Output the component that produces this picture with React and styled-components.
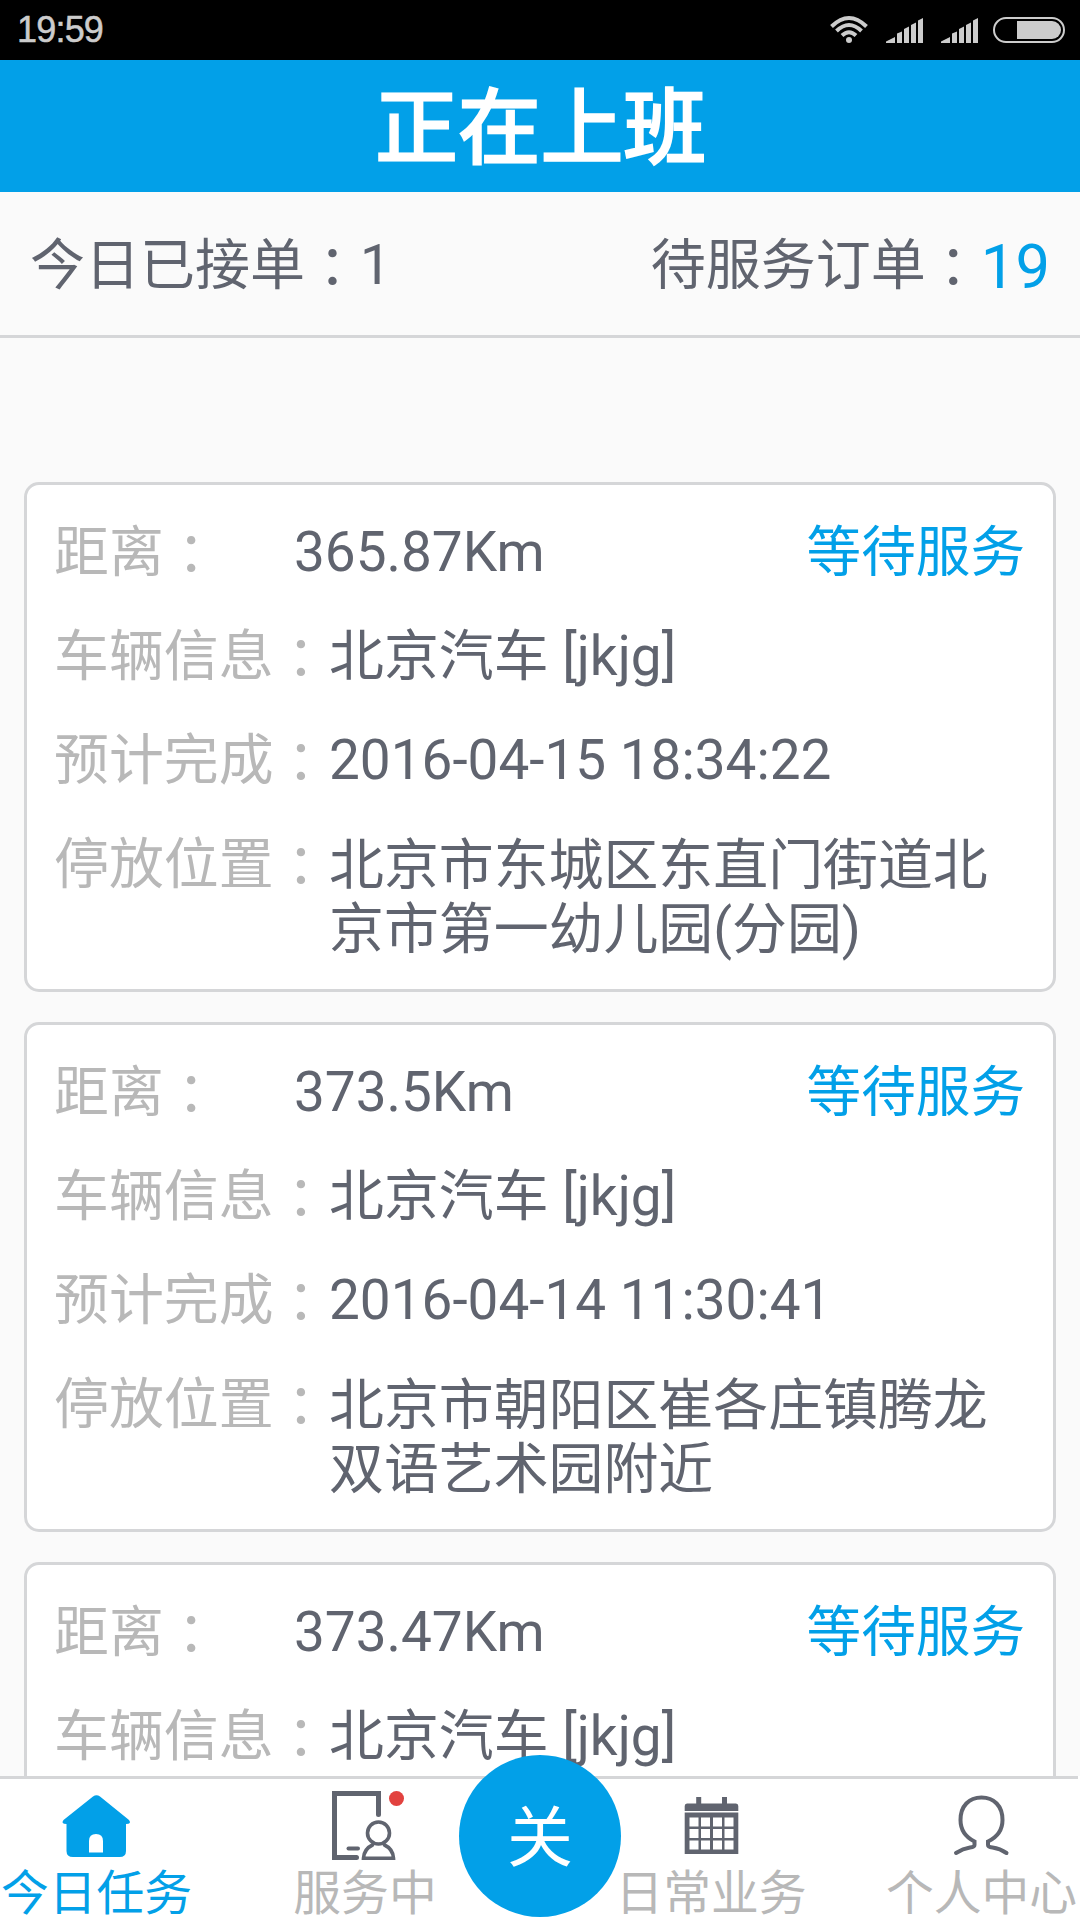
import React from "react";
import styled, { createGlobalStyle } from "styled-components";

const BLUE = "#02a0e8";
const INK = "#60646f";
const MUTED = "#b8b8b8";
const LINE = "#d5d6d8";

const GlobalStyle = createGlobalStyle`
  * { box-sizing: border-box; }
  body {
    margin: 0;
    background: #fafafa;
    font-family: Roboto, "Noto Sans CJK SC", sans-serif;
  }
`;

const Screen = styled.div`
  width: 1080px;
  height: 1920px;
  overflow: hidden;
  display: flex;
  flex-direction: column;
  background: #fafafa;
  color: ${INK};
`;

const StatusBar = styled.div`
  flex: none;
  height: 60px;
  padding: 0 15px 0 17px;
  display: flex;
  align-items: center;
  justify-content: space-between;
  background: #000;
`;

const Clock = styled.span`
  font-family: "Liberation Sans", Arial, sans-serif;
  font-size: 36px;
  line-height: 60px;
  letter-spacing: -0.8px;
  color: #ccc;
  -webkit-text-stroke: 0.5px #ccc;
`;

const StatusIcons = styled.svg`
  display: block;
  width: 240px;
  height: 60px;
`;

const TitleBar = styled.h1`
  flex: none;
  margin: 0;
  padding-left: 2px;
  height: 132px;
  background: ${BLUE};
  color: #fff;
  text-align: center;
  font-size: 82px;
  font-weight: 400;
  letter-spacing: 0.8px;
  line-height: 138px;
  -webkit-text-stroke: 3px #fff;
`;

const Stats = styled.div`
  flex: none;
  height: 146px;
  padding: 0 30px;
  display: flex;
  justify-content: space-between;
  border-bottom: 3px solid ${LINE};
  font-size: 55px;
  line-height: 146px;
`;

const Stat = styled.div`
  display: flex;
  white-space: pre;
`;

const FullColon = styled.span`
  font-family: "Noto Sans CJK JP", "Noto Sans CJK TC", sans-serif;
  line-height: 0;
  vertical-align: -3px;
`;

const Count = styled.span`
  color: ${(p) => (p.$accent ? BLUE : INK)};
  font-size: ${(p) => (p.$accent ? 61.5 : 55)}px;
  line-height: ${(p) => (p.$accent ? 150 : 146)}px;
`;

const OrderList = styled.main`
  flex: 1;
  min-height: 0;
  overflow: hidden;
  padding: 144px 24px 0;
  display: flex;
  flex-direction: column;
  gap: 30px;
`;

const Card = styled.article`
  flex: none;
  height: 510px;
  padding: 15px 28px 0 27px;
  border: 3px solid ${LINE};
  border-radius: 15px;
  background: #fff;
  font-size: 54.9px;
`;

const Row = styled.div`
  display: flex;
  height: 104px;
  line-height: 104px;
  white-space: nowrap;
`;

const Label = styled.span`
  flex: none;
  width: ${(p) => p.$width || 275}px;
  color: ${MUTED};
`;

const Value = styled.span`
  flex: 1;
`;

const Address = styled.span`
  flex: none;
  width: 664px;
  padding-top: 21px;
  line-height: 64.45px;
  white-space: normal;
`;

const State = styled.span`
  color: ${BLUE};
  font-size: 54.6px;
`;

const TabBar = styled.nav`
  flex: none;
  position: relative;
  height: 144px;
  background: #fff;
`;

const Tabs = styled.div`
  width: 1078px;
  height: 144px;
  display: grid;
  grid-template-columns: 193px 344px 348px 193px;
  border-top: 3px solid ${LINE};
`;

const Tab = styled.div`
  display: flex;
  flex-direction: column;
  align-items: center;
  gap: 5px;
  color: ${(p) => (p.$active ? BLUE : MUTED)};
  font-size: 47.8px;
  line-height: 52px;
  white-space: nowrap;
`;

const TabIcon = styled.svg`
  flex: none;
  display: block;
  width: 80px;
  height: 84px;
`;

const CloseButton = styled.button`
  position: absolute;
  left: 459px;
  top: -21px;
  width: 162px;
  height: 162px;
  padding: 5px 0 0;
  border: 0;
  border-radius: 50%;
  background: ${BLUE};
  color: #fff;
  font: 66px/157px Roboto, "Noto Sans CJK SC", sans-serif;
`;

const Signal = ({ x }) => (
  <path
    transform={`translate(${x} 0)`}
    d="M0 43V41.600L9 37V43ZM11 43V33.500L16 31.500V43ZM18 43V29L23 26.500V43ZM25 43V25L30 22.500V43ZM32 43V20.500L37 18V43Z"
  />
);

const PhoneStatus = () => (
  <StatusIcons viewBox="825 0 240 60" fill="#ccc">
    <g fill="none" stroke="#ccc" strokeWidth="4">
      <path d="M831.500 26.500Q849 9.500 866.500 26.500" />
      <path d="M836.500 31Q849 19 861.500 31" />
      <path d="M842 35.500Q849 29 856 35.500" />
    </g>
    <circle cx="849" cy="40" r="3" />
    <Signal x={886} />
    <Signal x={941} />
    <rect x="994" y="18" width="70" height="24" rx="12" fill="none" stroke="#ccc" strokeWidth="2" />
    <path d="M1017 21H1052A9 9 0 0 1 1052 39H1017Z" />
  </StatusIcons>
);

const HomeIcon = () => (
  <TabIcon viewBox="57.5 1779 80 84" fill={BLUE}>
    <path
      fillRule="evenodd"
      d="M93.500 1796.500Q97 1794 100.500 1796.500L129.500 1820Q132.500 1824 126.500 1824V1851Q126.500 1857 120 1857H73.500Q67 1857 67 1851V1824Q61 1824 64 1820ZM89.500 1852.500H103.500V1841Q103.500 1834 96.500 1834T89.500 1841Z"
    />
  </TabIcon>
);

const ServiceIcon = () => (
  <TabIcon viewBox="325 1779 80 84" fill="none" stroke={INK} strokeLinecap="round">
    <path d="M378.500 1814.500V1793.500H334.500V1857.500H356.500" strokeWidth="5" />
    <path d="M348.500 1848.500H358" strokeWidth="4" />
    <circle cx="378.500" cy="1833" r="11" strokeWidth="3.600" />
    <path d="M372.500 1845Q364 1849 363.500 1858.200H393.500Q393 1849 384.500 1845" strokeWidth="3.600" />
    <circle cx="396.500" cy="1798.500" r="7.500" fill="#e2423f" stroke="none" />
  </TabIcon>
);

const CalendarIcon = () => (
  <TabIcon viewBox="671 1779 80 84">
    <path
      fill={INK}
      d="M684.700 1811V1806Q684.700 1803.500 687 1803.500H696.200V1797H701.200V1803.500H722V1797H727V1803.500H736Q738.300 1803.500 738.300 1806V1811Z"
    />
    <rect x="684.700" y="1812.500" width="53.600" height="41.500" fill={INK} />
    <g fill="#fff">
      {[1817.5, 1829, 1840.5].map((y) =>
        [689.5, 701, 713, 724.5].map((x) => <rect key={`${x}-${y}`} x={x} y={y} width="9" height="9" />)
      )}
    </g>
  </TabIcon>
);

const ProfileIcon = () => (
  <TabIcon viewBox="942 1779 80 84" fill="none" stroke={INK} strokeWidth="4" strokeLinecap="round">
    <path d="M956 1853Q963 1848.500 970 1847.500Q974.500 1847 974.500 1845V1841.500Q960.500 1834.500 960.500 1820C960.500 1806 969 1797.500 981.500 1797.500S1002.500 1806 1002.500 1820Q1002.500 1834.500 988 1841.500V1845Q988 1847 992.500 1847.500Q1000 1848.500 1006.500 1853" />
  </TabIcon>
);

const orders = [
  { distance: "365.87Km", time: "2016-04-15 18:34:22", address: "北京市东城区东直门街道北京市第一幼儿园(分园)" },
  { distance: "373.5Km", time: "2016-04-14 11:30:41", address: "北京市朝阳区崔各庄镇腾龙双语艺术园附近" },
  { distance: "373.47Km", time: "", address: "" },
];

const FieldLabel = ({ text, width }) => (
  <Label $width={width}>
    {text}
    <FullColon>：</FullColon>
  </Label>
);

const Order = ({ distance, time, address }) => (
  <Card>
    <Row>
      <FieldLabel text="距离" width={240} />
      <Value>{distance}</Value>
      <State>等待服务</State>
    </Row>
    <Row>
      <FieldLabel text="车辆信息" />
      <Value>北京汽车 [jkjg]</Value>
    </Row>
    {time && (
      <Row>
        <FieldLabel text="预计完成" />
        <Value>{time}</Value>
      </Row>
    )}
    {address && (
      <Row>
        <FieldLabel text="停放位置" />
        <Address>{address}</Address>
      </Row>
    )}
  </Card>
);

export default function App() {
  return (
    <Screen>
      <GlobalStyle />
      <StatusBar>
        <Clock>19:59</Clock>
        <PhoneStatus />
      </StatusBar>
      <TitleBar>正在上班</TitleBar>
      <Stats>
        <Stat>
          <span>今日已接单<FullColon>：</FullColon></span>
          <Count>1</Count>
        </Stat>
        <Stat>
          <span>待服务订单<FullColon>：</FullColon></span>
          <Count $accent>19</Count>
        </Stat>
      </Stats>
      <OrderList>
        {orders.map((o) => (
          <Order key={o.distance} {...o} />
        ))}
      </OrderList>
      <TabBar>
        <Tabs>
          <Tab $active>
            <HomeIcon />
            今日任务
          </Tab>
          <Tab>
            <ServiceIcon />
            服务中
          </Tab>
          <Tab>
            <CalendarIcon />
            日常业务
          </Tab>
          <Tab>
            <ProfileIcon />
            个人中心
          </Tab>
        </Tabs>
        <CloseButton>关</CloseButton>
      </TabBar>
    </Screen>
  );
}
